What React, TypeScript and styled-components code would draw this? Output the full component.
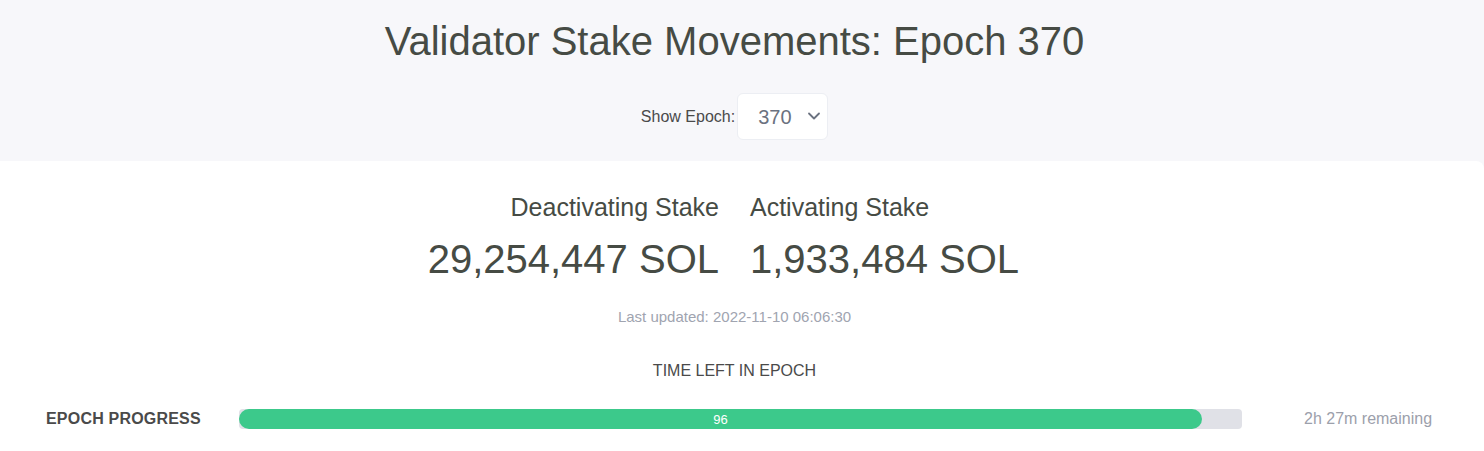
import React from 'react';
import styled, { createGlobalStyle } from 'styled-components';
import { ChevronDown } from 'lucide-react';

const GlobalStyle = createGlobalStyle`
  html, body {
    margin: 0;
    padding: 0;
    background: #ffffff;
  }

  body {
    font-family: "Liberation Sans", Arial, sans-serif;
    color: #464b44;
  }
`;

const Page = styled.div`
  width: 1484px;
  height: 451px;
  overflow: hidden;
  background: #f7f7fa;
`;

const Header = styled.header`
  display: flex;
  flex-direction: column;
  align-items: center;
  padding: 16px 15px 21px 0;
  background: #f7f7fa;
`;

const Title = styled.h1`
  margin: 0;
  font-size: 40px;
  line-height: 50px;
  font-weight: 400;
  color: #464b44;
`;

const EpochPicker = styled.label`
  display: flex;
  align-items: center;
  gap: 2px;
  margin-top: 27px;
  font-size: 16px;
  color: #4a4a4a;
`;

const SelectWrap = styled.div`
  position: relative;
`;

const Select = styled.select`
  appearance: none;
  width: 91px;
  height: 47px;
  padding: 0 0 0 20px;
  border: 1px solid #eceef3;
  border-radius: 6px;
  background: #ffffff;
  font-family: "Liberation Sans", Arial, sans-serif;
  font-size: 20px;
  color: #6b7280;
  outline: none;
`;

const Chevron = styled(ChevronDown)`
  position: absolute;
  right: 4px;
  top: 13px;
  pointer-events: none;
  color: #6b7280;
`;

const Content = styled.main`
  background: #ffffff;
  border-top-right-radius: 8px;
  padding: 20px 0 23px;
  height: 291px;
  box-sizing: border-box;
`;

const Stakes = styled.div`
  display: grid;
  grid-template-columns: 1fr 1fr;
  column-gap: 31px;
  padding-right: 15px;
`;

const Stake = styled.div<{ $align: 'left' | 'right' }>`
  text-align: ${(p) => p.$align};
`;

const StakeLabel = styled.div`
  font-size: 25px;
  line-height: 52px;
  color: #464b44;
`;

const StakeValue = styled.div`
  font-size: 40px;
  line-height: 52px;
  color: #464b44;
`;

const Updated = styled.p`
  margin: 23px 0 0;
  padding-right: 15px;
  text-align: center;
  font-size: 15px;
  line-height: 18px;
  color: #a0a4b0;
`;

const SectionTitle = styled.h2`
  margin: 35px 0 0;
  padding-right: 15px;
  text-align: center;
  font-size: 16px;
  line-height: 20px;
  font-weight: 400;
  text-transform: uppercase;
  color: #4a4a4a;
`;

const ProgressRow = styled.div`
  display: flex;
  align-items: center;
  margin-top: 28px;
  padding-left: 46px;
`;

const ProgressLabel = styled.span`
  width: 193px;
  flex: 0 0 193px;
  font-size: 16px;
  font-weight: 700;
  letter-spacing: 0.2px;
  color: #4a4a4a;
`;

const Track = styled.div`
  flex: 0 0 1003px;
  height: 20px;
  border-radius: 4px;
  background: #e0e1e7;
  overflow: hidden;
`;

const Fill = styled.div`
  display: flex;
  align-items: center;
  justify-content: center;
  height: 100%;
  border-radius: 10px;
  background: #3cc98b;
  color: #ffffff;
  font-size: 13px;
`;

const Remaining = styled.span`
  margin-left: 62px;
  font-size: 16px;
  color: #9ca0ab;
`;

const App: React.FC = () => {
  const progress = 96;

  return (
    <Page>
      <GlobalStyle />
      <Header>
        <Title>Validator Stake Movements: Epoch 370</Title>
        <EpochPicker>
          Show Epoch:
          <SelectWrap>
            <Select defaultValue="370">
              <option value="370">370</option>
              <option value="369">369</option>
              <option value="368">368</option>
            </Select>
            <Chevron size={20} strokeWidth={2.2} />
          </SelectWrap>
        </EpochPicker>
      </Header>

      <Content>
        <Stakes>
          <Stake $align="right">
            <StakeLabel>Deactivating Stake</StakeLabel>
            <StakeValue>29,254,447 SOL</StakeValue>
          </Stake>
          <Stake $align="left">
            <StakeLabel>Activating Stake</StakeLabel>
            <StakeValue>1,933,484 SOL</StakeValue>
          </Stake>
        </Stakes>

        <Updated>Last updated: 2022-11-10 06:06:30</Updated>

        <SectionTitle>Time left in epoch</SectionTitle>

        <ProgressRow>
          <ProgressLabel>EPOCH PROGRESS</ProgressLabel>
          <Track>
            <Fill style={{ width: `${progress}%` }}>{progress}</Fill>
          </Track>
          <Remaining>2h 27m remaining</Remaining>
        </ProgressRow>
      </Content>
    </Page>
  );
};

export default App;
